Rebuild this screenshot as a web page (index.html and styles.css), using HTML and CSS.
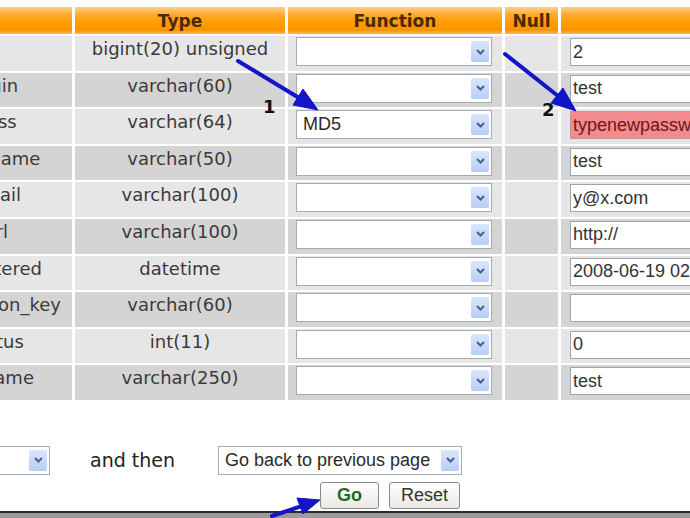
FILE: index.html
```html
<!DOCTYPE html>
<html lang="en">
<head>
    <meta charset="UTF-8">
    <title>Edit row - wp_users</title>
    <link rel="stylesheet" href="styles.css">
</head>
<body>
<div class="page">
    <table class="insert">
        <colgroup>
            <col class="c-field"><col class="c-type"><col class="c-func"><col class="c-null"><col class="c-value">
        </colgroup>
        <thead>
        <tr><th>Field</th><th>Type</th><th>Function</th><th>Null</th><th>Value</th></tr>
        </thead>
        <tbody>
        <tr class="odd">
            <td class="name">ID</td>
            <td class="type">bigint(20) unsigned</td>
            <td class="func"><div class="sel func-sel"><span class="sel-val"></span><span class="sel-btn"><svg width="9" height="6" viewBox="0 0 9 6"><path d="M1 1 L4.5 4.5 L8 1" fill="none" stroke="#4b5f8c" stroke-width="2"/></svg></span></div></td>
            <td class="null"></td>
            <td class="val"><input type="text" value="2"></td>
        </tr>
        <tr class="even">
            <td class="name">user_login</td>
            <td class="type">varchar(60)</td>
            <td class="func"><div class="sel func-sel"><span class="sel-val"></span><span class="sel-btn"><svg width="9" height="6" viewBox="0 0 9 6"><path d="M1 1 L4.5 4.5 L8 1" fill="none" stroke="#4b5f8c" stroke-width="2"/></svg></span></div></td>
            <td class="null"></td>
            <td class="val"><input type="text" value="test"></td>
        </tr>
        <tr class="odd">
            <td class="name">user_pass</td>
            <td class="type">varchar(64)</td>
            <td class="func"><div class="sel func-sel"><span class="sel-val">MD5</span><span class="sel-btn"><svg width="9" height="6" viewBox="0 0 9 6"><path d="M1 1 L4.5 4.5 L8 1" fill="none" stroke="#4b5f8c" stroke-width="2"/></svg></span></div></td>
            <td class="null"></td>
            <td class="val"><input type="text" class="marked" value="typenewpassword"></td>
        </tr>
        <tr class="even">
            <td class="name">user_nicename</td>
            <td class="type">varchar(50)</td>
            <td class="func"><div class="sel func-sel"><span class="sel-val"></span><span class="sel-btn"><svg width="9" height="6" viewBox="0 0 9 6"><path d="M1 1 L4.5 4.5 L8 1" fill="none" stroke="#4b5f8c" stroke-width="2"/></svg></span></div></td>
            <td class="null"></td>
            <td class="val"><input type="text" value="test"></td>
        </tr>
        <tr class="odd">
            <td class="name">user_email</td>
            <td class="type">varchar(100)</td>
            <td class="func"><div class="sel func-sel"><span class="sel-val"></span><span class="sel-btn"><svg width="9" height="6" viewBox="0 0 9 6"><path d="M1 1 L4.5 4.5 L8 1" fill="none" stroke="#4b5f8c" stroke-width="2"/></svg></span></div></td>
            <td class="null"></td>
            <td class="val"><input type="text" value="y@x.com"></td>
        </tr>
        <tr class="even">
            <td class="name">user_url</td>
            <td class="type">varchar(100)</td>
            <td class="func"><div class="sel func-sel"><span class="sel-val"></span><span class="sel-btn"><svg width="9" height="6" viewBox="0 0 9 6"><path d="M1 1 L4.5 4.5 L8 1" fill="none" stroke="#4b5f8c" stroke-width="2"/></svg></span></div></td>
            <td class="null"></td>
            <td class="val"><input type="text" value="http://"></td>
        </tr>
        <tr class="odd">
            <td class="name">user_registered</td>
            <td class="type">datetime</td>
            <td class="func"><div class="sel func-sel"><span class="sel-val"></span><span class="sel-btn"><svg width="9" height="6" viewBox="0 0 9 6"><path d="M1 1 L4.5 4.5 L8 1" fill="none" stroke="#4b5f8c" stroke-width="2"/></svg></span></div></td>
            <td class="null"></td>
            <td class="val"><input type="text" value="2008-06-19 02:26:35"></td>
        </tr>
        <tr class="even">
            <td class="name">user_activation_key</td>
            <td class="type">varchar(60)</td>
            <td class="func"><div class="sel func-sel"><span class="sel-val"></span><span class="sel-btn"><svg width="9" height="6" viewBox="0 0 9 6"><path d="M1 1 L4.5 4.5 L8 1" fill="none" stroke="#4b5f8c" stroke-width="2"/></svg></span></div></td>
            <td class="null"></td>
            <td class="val"><input type="text" value=""></td>
        </tr>
        <tr class="odd">
            <td class="name">user_status</td>
            <td class="type">int(11)</td>
            <td class="func"><div class="sel func-sel"><span class="sel-val"></span><span class="sel-btn"><svg width="9" height="6" viewBox="0 0 9 6"><path d="M1 1 L4.5 4.5 L8 1" fill="none" stroke="#4b5f8c" stroke-width="2"/></svg></span></div></td>
            <td class="null"></td>
            <td class="val"><input type="text" value="0"></td>
        </tr>
        <tr class="even">
            <td class="name">display_name</td>
            <td class="type">varchar(250)</td>
            <td class="func"><div class="sel func-sel"><span class="sel-val"></span><span class="sel-btn"><svg width="9" height="6" viewBox="0 0 9 6"><path d="M1 1 L4.5 4.5 L8 1" fill="none" stroke="#4b5f8c" stroke-width="2"/></svg></span></div></td>
            <td class="null"></td>
            <td class="val"><input type="text" value="test"></td>
        </tr>
        </tbody>
    </table>

    <div class="actions">
        <div class="sel save-sel"><span class="sel-val">Save</span><span class="sel-btn"><svg width="9" height="6" viewBox="0 0 9 6"><path d="M1 1 L4.5 4.5 L8 1" fill="none" stroke="#4b5f8c" stroke-width="2"/></svg></span></div>
        <span class="and-then">and then</span>
        <div class="next">
            <div class="sel next-sel"><span class="sel-val">Go back to previous page</span><span class="sel-btn"><svg width="9" height="6" viewBox="0 0 9 6"><path d="M1 1 L4.5 4.5 L8 1" fill="none" stroke="#4b5f8c" stroke-width="2"/></svg></span></div>
            <div class="buttons">
                <button class="btn btn-go">Go</button>
                <button class="btn">Reset</button>
            </div>
        </div>
    </div>

    <div class="frame-edge"></div>
</div>

<!-- annotation arrows drawn over the screenshot -->
<svg class="notes" width="690" height="518" viewBox="0 0 690 518">
    <g fill="#1414c8" stroke="#1414c8">
        <line x1="238" y1="61" x2="300" y2="98.5" stroke-width="4" stroke-linecap="round"/>
        <polygon points="318,110 293,105 303,89" stroke-width="1"/>
        <line x1="505" y1="54" x2="558" y2="96" stroke-width="4" stroke-linecap="round"/>
        <polygon points="576,111 551,103 563,88" stroke-width="1"/>
        <line x1="272" y1="516" x2="302" y2="506" stroke-width="4" stroke-linecap="round"/>
        <polygon points="320,500 303,514 297,498" stroke-width="1"/>
    </g>
    <text x="263" y="113" class="num">1</text>
    <text x="542" y="116" class="num">2</text>
</svg>
</body>
</html>
```

FILE: styles.css
```css
html, body {
    margin: 0;
    overflow: hidden;
}

body {
    width: 690px;
    height: 518px;
    background: #fff;
    font-family: "DejaVu Sans", Verdana, sans-serif;
    color: #3a3a3a;
}

.page {
    margin-left: -131px;
    padding-top: 5px;
}

table.insert {
    border-collapse: separate;
    border-spacing: 3px 2px;
    table-layout: fixed;
    width: 1095px;
}

col.c-field { width: 200px; }
col.c-type { width: 210px; }
col.c-func { width: 214px; }
col.c-null { width: 53px; }
col.c-value { width: 400px; }

.insert th {
    height: 27px;
    padding: 0;
    background: linear-gradient(to bottom, #ffcf85 0%, #ffa92a 30%, #ff9a00 60%, #f99400 85%, #ffb64a 100%);
    font-size: 17px;
    font-weight: bold;
    color: #4a2a00;
    text-align: center;
}

.insert td {
    height: 34.6px;
    padding: 0;
    vertical-align: top;
    box-sizing: border-box;
}

tr.odd td {
    background: #e6e6e6;
}

tr.even td {
    background: #d4d4d4;
}

td.name, td.type {
    text-align: center;
    font-size: 18px;
    padding-top: 2px;
    white-space: nowrap;
}

td.func {
    padding: 1px 0 0 8px;
}

td.val {
    padding: 2px 0 0 9px;
}

.sel {
    display: flex;
    align-items: center;
    height: 29px;
    box-sizing: border-box;
    border: 1px solid #a4abb2;
    background: #fff;
    font-family: "Liberation Sans", Arial, sans-serif;
    font-size: 18px;
    color: #2a2a2a;
}

.func-sel {
    width: 196px;
}

.sel-val {
    flex: 1;
    padding-left: 6px;
    white-space: nowrap;
    overflow: hidden;
}

.sel-btn {
    width: 18px;
    height: 21px;
    margin-right: 2px;
    display: flex;
    align-items: center;
    justify-content: center;
    background: linear-gradient(to bottom, #dae6fd, #b8cdf6);
    border-radius: 2px;
}

.val input {
    width: 300px;
    height: 28px;
    box-sizing: border-box;
    border: 1px solid #9fa5ab;
    padding: 0 2px;
    font-family: "Liberation Sans", Arial, sans-serif;
    font-size: 18px;
    color: #333;
    background: #fff;
    outline: 0;
}

.val input.marked {
    background: #f28b8d;
    border-color: #b89a9a;
    color: #6e1616;
}

.actions {
    display: flex;
    align-items: flex-start;
    margin-top: 44px;
    padding-left: 71px;
}

.save-sel {
    width: 110px;
    margin-right: 40px;
}

.and-then {
    line-height: 29px;
    font-size: 19px;
    color: #222;
    margin-right: 43px;
}

.next {
    width: 244px;
}

.next-sel {
    width: 244px;
}

.buttons {
    display: flex;
    justify-content: flex-end;
    gap: 10px;
    margin-top: 7px;
    padding-right: 2px;
}

.btn {
    height: 27px;
    width: 71px;
    padding: 0;
    border: 1px solid #858b93;
    border-radius: 3px;
    background: linear-gradient(to bottom, #ffffff, #ebe8e2);
    font-family: "Liberation Sans", Arial, sans-serif;
    font-size: 18px;
    color: #333;
}

.btn.btn-go {
    width: 59px;
    font-weight: bold;
    color: #1d6b1d;
}

.frame-edge {
    margin-top: 2px;
    height: 7px;
    border-top: 2px solid #2b2b2b;
    background: #9b9b9b;
}

.notes {
    position: absolute;
    left: 0;
    top: 0;
    pointer-events: none;
}

.notes .num {
    font-family: "DejaVu Sans", Verdana, sans-serif;
    font-size: 18px;
    font-weight: bold;
    fill: #111;
}
```
